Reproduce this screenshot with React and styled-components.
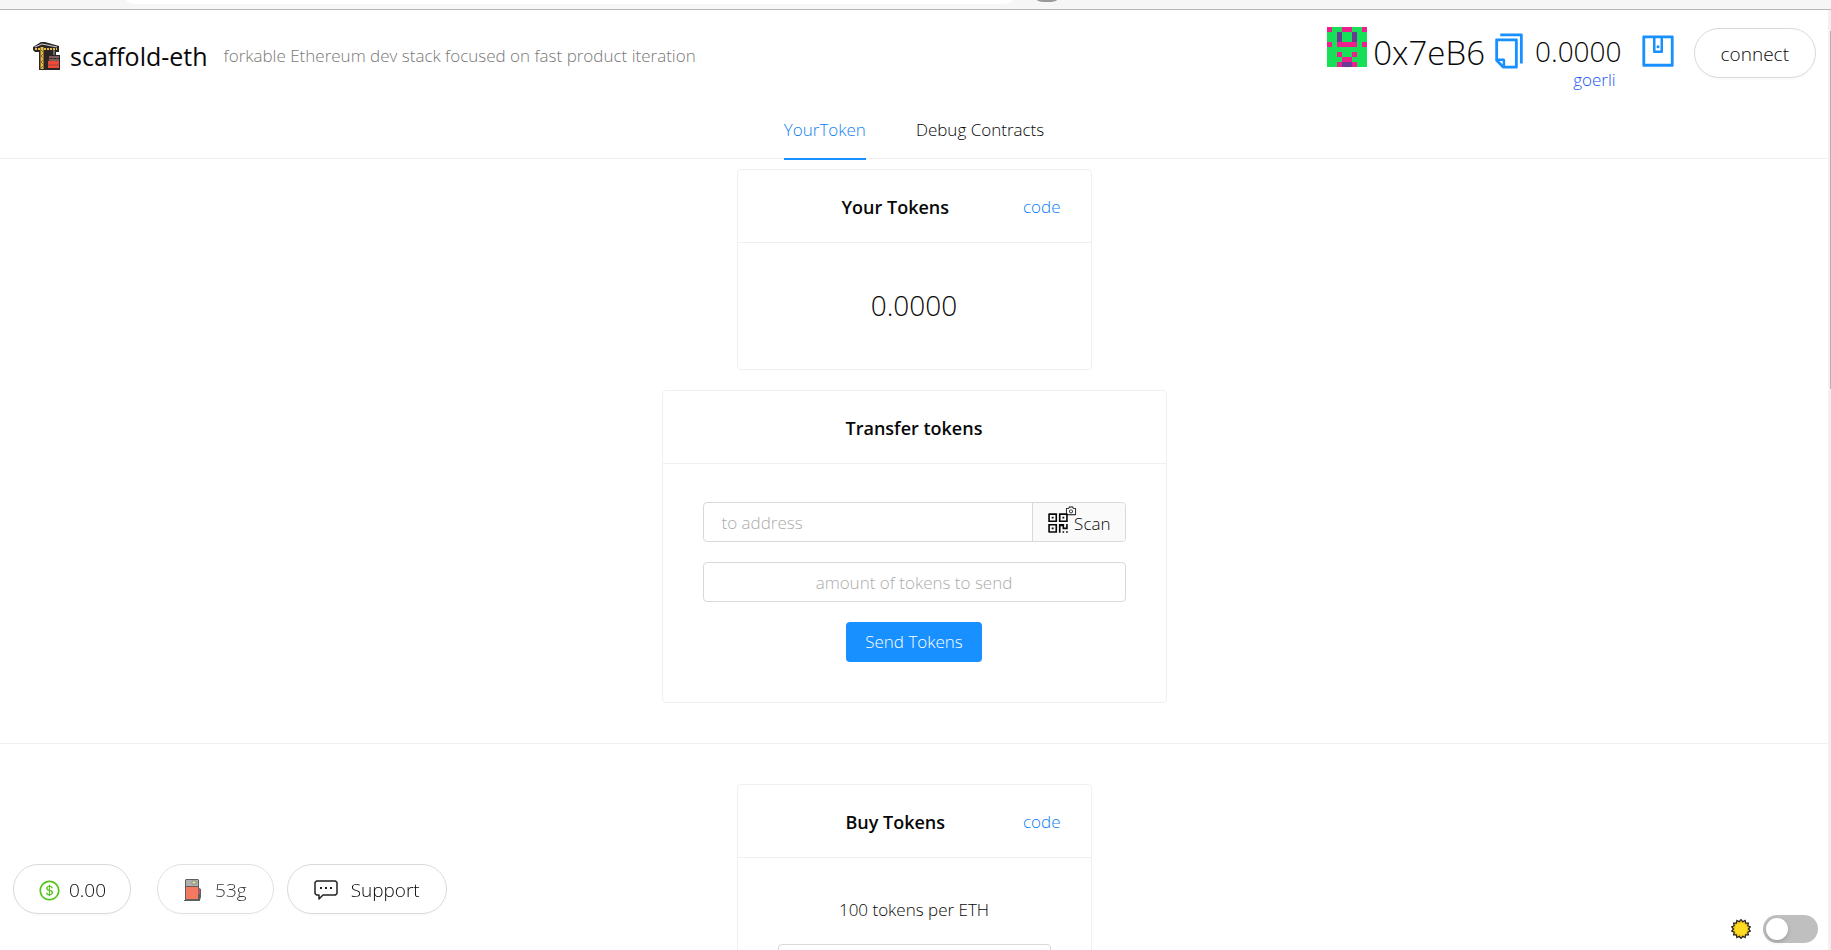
import React from "react";
import styled, { createGlobalStyle } from "styled-components";
import {
  AiOutlineCamera,
  AiOutlineCopy,
  AiOutlineDollarCircle,
  AiOutlineQrcode,
  AiOutlineWallet,
} from "react-icons/ai";

const GlobalStyle = createGlobalStyle`
  * { box-sizing: border-box; }
  body {
    margin: 0;
    background: #fff;
    color: #080808;
    font-family: "Open Sans", "Noto Sans", sans-serif;
    font-size: 17px;
    font-weight: 300;
    line-height: 28px;
  }
  button, input { font: inherit; color: inherit; }
  a { color: #0f80f5; text-decoration: none; }
  h1, h2, p { margin: 0; }
`;

const Shell = styled.div`
  height: 100vh;
  display: flex;
  flex-direction: column;
  overflow: hidden;
`;

const BrowserEdge = styled.div`
  flex: none;
  height: 10px;
  padding-left: 126px;
  background: #f6f6f6;
  border-bottom: 1px solid #b9b9b9;
  display: flex;
  gap: 24px;
  overflow: hidden;
`;

const AddressPill = styled.div`
  width: 52%;
  height: 4px;
  background: #fff;
  border-radius: 0 0 12px 12px / 0 0 4px 4px;
`;

const ToolbarDot = styled.div`
  width: 20px;
  height: 2px;
  border-radius: 0 0 10px 10px / 0 0 2px 2px;
  background: #999;
`;

const Body = styled.div`
  flex: 1;
  min-height: 0;
  display: flex;
`;

const Page = styled.div`
  flex: 1;
  min-width: 0;
  overflow: hidden;
`;

const ScrollTrack = styled.div`
  flex: none;
  width: 3px;
  padding: 21px 0 0 2px;
  background: #f1f1f1;
`;

const ScrollThumb = styled.div`
  height: 39%;
  background: #b4b4b4;
`;

const Header = styled.header`
  display: flex;
  justify-content: space-between;
  align-items: flex-start;
  padding: 17px 12px 0 32px;
  height: 90px;
`;

const Brand = styled.div`
  display: flex;
  align-items: center;
  gap: 8px;
  height: 58px;
`;

const BrandName = styled.h1`
  font-size: 25px;
  font-weight: 500;
  line-height: 32px;
`;

const Tagline = styled.span`
  margin-left: 8px;
  color: #787878;
`;

const Account = styled.div`
  display: flex;
  align-items: flex-start;
`;

const Address = styled.span`
  padding: 0 4px 0 6px;
  font-size: 33px;
  line-height: 52px;
`;

const IconButton = styled.button`
  display: flex;
  border: 0;
  padding: 4px 0;
  background: none;
  color: #1890ff;
`;

const WalletIcon = styled(AiOutlineWallet)`
  transform: rotate(-90deg);
`;

const Balance = styled.div`
  display: flex;
  flex-direction: column;
  align-items: flex-end;
  padding: 0 16px 0 6px;
  font-size: 28px;
  line-height: 48px;
`;

const Network = styled.span`
  padding-right: 6px;
  color: #1557f0;
  font-size: 17px;
  line-height: 10px;
`;

const Pill = styled.button`
  display: flex;
  align-items: center;
  justify-content: center;
  gap: ${(p) => (p.$roomy ? 13 : 8)}px;
  height: 50px;
  padding: 2px ${(p) => (p.$roomy ? 26 : 24)}px 0;
  border: 1px solid #d9d9d9;
  border-radius: 25px;
  background: #fff;
  box-shadow: 0 2px 0 rgba(0, 0, 0, 0.015);
  font-size: 19px;
  opacity: ${(p) => (p.$dim ? 0.8 : 1)};
`;

const ConnectPill = styled(Pill)`
  margin: 1px 0 0 16px;
`;

const Tabs = styled.nav`
  display: flex;
  justify-content: center;
  gap: 50px;
  border-bottom: 1px solid #f0f0f0;
`;

const Tab = styled.a`
  height: 60px;
  margin-bottom: -2px;
  padding-top: 16px;
  border-bottom: 2px solid ${(p) => (p.$active ? "#1890ff" : "transparent")};
  color: ${(p) => (p.$active ? "#0f80f5" : "#080808")};
`;

const Section = styled.section`
  display: flex;
  flex-direction: column;
  align-items: center;
  gap: 20px;
  padding: ${(p) => (p.$first ? "10px" : "40px")} 0 40px;
  border-bottom: 1px solid #f0f0f0;
`;

const Card = styled.article`
  width: ${(p) => (p.$wide ? 505 : 355)}px;
  border: 1px solid #f0f0f0;
  border-radius: 4px;
`;

const CardHead = styled.div`
  display: flex;
  align-items: center;
  height: 73px;
  padding: 2px 30px 0;
  border-bottom: 1px solid #f0f0f0;
`;

const CardTitle = styled.h2`
  flex: 1;
  text-align: center;
  font-size: 18px;
  font-weight: 600;
  line-height: 28px;
`;

const CardBody = styled.div`
  display: flex;
  flex-direction: column;
  align-items: center;
  gap: 20px;
  padding: 38px 40px 40px;
`;

const TokenBalance = styled.p`
  font-size: 28px;
  line-height: 48px;
`;

const Field = styled.div`
  width: 100%;
  height: 40px;
  display: flex;
  border: 1px solid #d9d9d9;
  border-radius: 4px;
  overflow: hidden;
`;

const Input = styled.input`
  flex: 1;
  min-width: 0;
  border: 0;
  padding: 1px 18px 0;
  outline: none;
  background: none;
  text-align: ${(p) => (p.$center ? "center" : "left")};
  &::placeholder { color: #acacac; opacity: 1; }
`;

const ScanButton = styled.button`
  display: flex;
  align-items: center;
  gap: 3px;
  padding: 4px 14px 0 12px;
  border: 0;
  border-left: 1px solid #d9d9d9;
  background: #fafafa;
`;

const ScanIcon = styled.span`
  position: relative;
  display: flex;
  padding-bottom: 2px;
`;

const CameraBadge = styled.span`
  position: absolute;
  top: -5px;
  right: -6px;
  display: flex;
`;

const PrimaryButton = styled.button`
  height: 40px;
  padding: 0 19px;
  border: 0;
  border-radius: 4px;
  background: #1890ff;
  color: #fff;
`;

const StatusBar = styled.div`
  position: fixed;
  left: 13px;
  bottom: 36px;
  display: flex;
  gap: 13px;
`;

const GasPill = styled(Pill)`
  margin-left: 13px;
`;

const ThemeBar = styled.div`
  position: fixed;
  right: 13px;
  bottom: 7px;
  display: flex;
  align-items: center;
  gap: 12px;
`;

const Switch = styled.input`
  appearance: none;
  display: flex;
  align-items: center;
  width: 55px;
  height: 28px;
  margin: 0;
  padding: 0 3px;
  border-radius: 14px;
  background: #bfbfbf;
  &::before {
    content: "";
    width: 22px;
    height: 22px;
    border-radius: 50%;
    background: #fff;
    box-shadow: 0 2px 4px rgba(0, 35, 11, 0.2);
  }
  &:checked { justify-content: flex-end; background: #1890ff; }
`;

const CraneIcon = () => (
  <svg width="30" height="30" viewBox="0 0 30 30" aria-hidden="true">
    <path d="M1 6L9 1h4l14 4v6h-3v3h4v15H7V11H3L1 9z" fill="#2b2624" />
    <path d="M3 6l7-3 15 3" stroke="#cfcfcf" fill="none" />
    <path d="M3 8h22" stroke="#e8bd45" strokeWidth="2" strokeDasharray="2 1" />
    <path d="M10 6v22" stroke="#e8bd45" strokeWidth="3" />
    <path d="M9 9l3 3-3 3 3 3-3 3 3 3-3 3" stroke="#8a6a1c" fill="none" />
    <path d="M22 9v5M17 16h10M17 19h10" stroke="#aaa" fill="none" />
    <path d="M16 20h11v7H16z" fill="#f04b38" />
    <path d="M18 15v6M21 15v5M25 15v6M16 24h11" stroke="#9c4a3e" />
  </svg>
);

const BLOCKS = [
  "pggppggp",
  "ggvggvgg",
  "ggvggvgg",
  "pgppppgp",
  "gggggggg",
  "ggpggpgg",
  "gggppggg",
  "ggpvvpgg",
];
const BLOCK_COLORS = { p: "#ee1e8c", v: "#6c3a96" };

const Blockie = () => (
  <svg width="40" height="40" viewBox="0 0 8 8" shapeRendering="crispEdges" aria-hidden="true">
    <rect width="8" height="8" fill="#17e058" />
    {BLOCKS.flatMap((row, y) =>
      [...row].map((c, x) =>
        c === "g" ? null : (
          <rect key={`${x}-${y}`} x={x} y={y} width="1" height="1" fill={BLOCK_COLORS[c]} />
        )
      )
    )}
  </svg>
);

const PumpIcon = () => (
  <svg width="18" height="24" viewBox="0 0 18 24" aria-hidden="true">
    <path d="M1 22V2l1-1h12l1 1v8l2 1v8l-1 3z" fill="#383838" />
    <path d="M2 2h12v6H2z" fill="#9b9b9b" />
    <path d="M8 3h4v3H8z" fill="#d5df74" stroke="#777" strokeWidth="1" />
    <path d="M2 9h12v12H2z" fill="#f0593a" />
    <path d="M15 11v5" stroke="#a5283c" strokeWidth="2" />
    <path d="M0 22.500h16" stroke="#383838" strokeWidth="1" />
  </svg>
);

const SpeechIcon = () => (
  <svg width="24" height="22" viewBox="0 0 24 22" fill="none" stroke="#222" strokeWidth="1.500" aria-hidden="true">
    <path d="M2.500 2h19l1.500 1.500v11l-1.500 1.500H9l-4 4v-4H2.500L1 14.500v-11z" strokeLinejoin="round" />
    <path d="M6 9h2M11 9h2M16 9h2" strokeWidth="2" />
  </svg>
);

const SUN_POINTS = Array.from({ length: 28 }, (_, i) => {
  const r = i % 2 ? 7.5 : 9.5;
  const a = (i * Math.PI) / 14;
  return `${(10 + r * Math.sin(a)).toFixed(2)},${(10 - r * Math.cos(a)).toFixed(2)}`;
}).join(" ");

const SunIcon = () => (
  <svg width="20" height="20" viewBox="0 0 20 20" aria-hidden="true">
    <polygon points={SUN_POINTS} fill="#f7c613" stroke="#222" strokeWidth="1.200" />
    <circle cx="10" cy="10" r="6" fill="#ffdc22" />
  </svg>
);

export default function App() {
  return (
    <Shell>
      <GlobalStyle />
      <BrowserEdge>
        <AddressPill />
        <ToolbarDot />
      </BrowserEdge>
      <Body>
        <Page>
          <Header>
            <Brand>
              <CraneIcon />
              <BrandName>scaffold-eth</BrandName>
              <Tagline>forkable Ethereum dev stack focused on fast product iteration</Tagline>
            </Brand>
            <Account>
              <Blockie />
              <Address>0x7eB6</Address>
              <IconButton aria-label="Copy address">
                <AiOutlineCopy size={40} />
              </IconButton>
              <Balance>
                0.0000
                <Network>goerli</Network>
              </Balance>
              <IconButton aria-label="Wallet">
                <WalletIcon size={40} />
              </IconButton>
              <ConnectPill $roomy>connect</ConnectPill>
            </Account>
          </Header>
          <Tabs>
            <Tab href="#token" $active>YourToken</Tab>
            <Tab href="#debug">Debug Contracts</Tab>
          </Tabs>
          <main>
            <Section $first>
              <Card>
                <CardHead>
                  <CardTitle>Your Tokens</CardTitle>
                  <a href="#code">code</a>
                </CardHead>
                <CardBody>
                  <TokenBalance>0.0000</TokenBalance>
                </CardBody>
              </Card>
              <Card $wide>
                <CardHead>
                  <CardTitle>Transfer tokens</CardTitle>
                </CardHead>
                <CardBody>
                  <Field>
                    <Input aria-label="to address" placeholder="to address" />
                    <ScanButton>
                      <ScanIcon>
                        <AiOutlineQrcode size={26} />
                        <CameraBadge>
                          <AiOutlineCamera size={12} />
                        </CameraBadge>
                      </ScanIcon>
                      Scan
                    </ScanButton>
                  </Field>
                  <Field>
                    <Input $center aria-label="amount of tokens to send" placeholder="amount of tokens to send" />
                  </Field>
                  <PrimaryButton>Send Tokens</PrimaryButton>
                </CardBody>
              </Card>
            </Section>
            <Section>
              <Card>
                <CardHead>
                  <CardTitle>Buy Tokens</CardTitle>
                  <a href="#code">code</a>
                </CardHead>
                <CardBody>
                  <p>100 tokens per ETH</p>
                  <Field>
                    <Input $center aria-label="amount of tokens to buy" />
                  </Field>
                </CardBody>
              </Card>
            </Section>
          </main>
        </Page>
        <ScrollTrack>
          <ScrollThumb />
        </ScrollTrack>
      </Body>
      <StatusBar>
        <Pill>
          <AiOutlineDollarCircle size={23} color="#52c41a" />
          0.00
        </Pill>
        <GasPill $dim $roomy>
          <PumpIcon />
          53g
        </GasPill>
        <Pill $roomy>
          <SpeechIcon />
          Support
        </Pill>
      </StatusBar>
      <ThemeBar>
        <SunIcon />
        <Switch type="checkbox" aria-label="Dark theme" />
      </ThemeBar>
    </Shell>
  );
}
